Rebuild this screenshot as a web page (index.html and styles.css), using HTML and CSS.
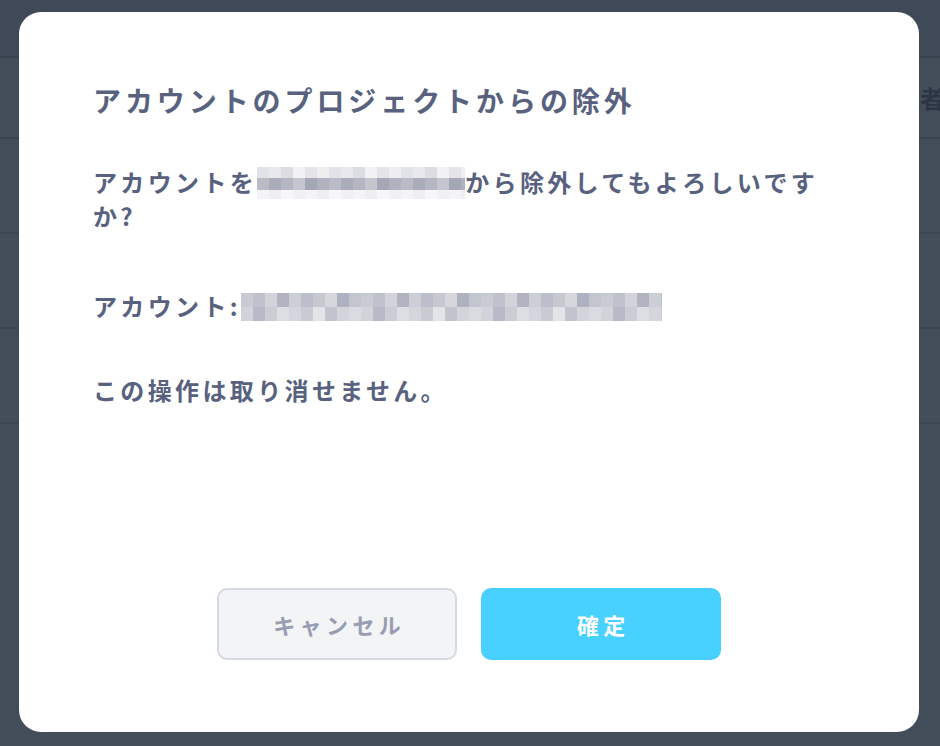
FILE: index.html
```html
<!DOCTYPE html>
<html lang="ja">
<head>
  <meta charset="UTF-8">
  <meta name="viewport" content="width=device-width, initial-scale=1.0">
  <title>アカウントのプロジェクトからの除外</title>
  <link rel="stylesheet" href="styles.css">
</head>
<body>
  <div class="page">
    <div class="topbar"></div>
    <div class="table-head">
      <span class="head-cell">管理者</span>
    </div>
    <div class="table-row"></div>
    <div class="table-row"></div>
    <div class="table-row"></div>
  </div>

  <div class="modal">
    <h1 class="modal-title">アカウントのプロジェクトからの除外</h1>
    <p class="modal-text">アカウントを<span class="mosaic mosaic-name"></span>から除外してもよろしいですか?</p>
    <p class="modal-text account">アカウント:<span class="mosaic mosaic-mail"></span></p>
    <p class="modal-text warning">この操作は取り消せません。</p>
    <div class="modal-footer">
      <button class="btn btn-cancel">キャンセル</button>
      <button class="btn btn-ok">確定</button>
    </div>
  </div>
</body>
</html>
```

FILE: styles.css
```css
body {
  margin: 0;
  background-color: #434c59;
  font-family: "Noto Sans CJK JP", "Noto Sans", sans-serif;
  overflow: hidden;
  height: 746px;
}

/* page behind the overlay */
.page {
  display: flex;
  flex-direction: column;
}
.topbar {
  height: 56px;
  background-color: #3f4957;
  border-bottom: 2px solid #39424e;
}
.table-head {
  height: 79px;
  border-bottom: 2px solid #3a434f;
  display: flex;
  align-items: center;
  padding-left: 872px;
  white-space: nowrap;
}
.head-cell {
  font-size: 24px;
  font-weight: bold;
  color: #2c3545;
}
.table-row {
  height: 93px;
  border-bottom: 2px solid #3d4551;
}

/* dialog */
.modal {
  position: absolute;
  left: 19px;
  top: 12px;
  width: 900px;
  height: 720px;
  box-sizing: border-box;
  padding: 69px 74px 72px;
  background-color: #fff;
  border-radius: 22px;
  display: flex;
  flex-direction: column;
  color: #58627f;
}
.modal-title {
  margin: 0;
  font-size: 28px;
  line-height: 39px;
  letter-spacing: 0.14em;
  font-weight: bold;
}
.modal-text {
  margin: 45px 0 0;
  font-size: 24px;
  line-height: 33px;
  letter-spacing: 0.14em;
  font-weight: bold;
}
.modal-text.account {
  margin-top: 57px;
}
.modal-text.warning {
  margin-top: 51px;
}

.mosaic {
  display: inline-block;
  background-repeat: no-repeat;
}
.mosaic-name {
  width: 208px;
  height: 32px;
  vertical-align: -7px;
  background-image:
    repeating-linear-gradient(90deg, #e2e3e8 0 12px, #e9e9ed 12px 24px, #dcdde3 24px 36px, #f2f2f4 36px 48px, #e4e4e9 48px 60px, #eeeef1 60px 72px),
    repeating-linear-gradient(90deg, #b9bbc7 0 12px, #a9acbb 12px 24px, #b4b6c3 24px 36px, #c3c5cf 36px 48px, #a4a7b6 48px 60px, #b0b2bf 60px 72px),
    repeating-linear-gradient(90deg, #f5f5f7 0 12px, #efeff2 12px 24px, #f7f7f9 24px 36px, #f1f1f4 36px 48px);
  background-size: 208px 11px, 208px 12px, 208px 9px;
  background-position: 0 0, 0 11px, 0 23px;
}
.mosaic-mail {
  width: 421px;
  height: 28px;
  vertical-align: -5px;
  background-image:
    repeating-linear-gradient(90deg, #c9cbd4 0 12px, #bfc1cc 12px 24px, #d3d4db 24px 36px, #b2b4c2 36px 48px, #cdcfd7 48px 60px, #bcbecb 60px 72px, #c6c8d1 72px 84px, #d6d7dd 84px 96px, #aeb1bf 96px 108px, #c3c5cf 108px 120px),
    repeating-linear-gradient(90deg, #d1d3da 0 12px, #b7b9c6 12px 24px, #cbcdd5 24px 36px, #dddee3 36px 48px, #d5d6dd 48px 60px, #c9cbd3 60px 72px, #e3e4e8 72px 84px, #c1c3cd 84px 96px, #d2d4db 96px 108px, #dadbe1 108px 120px);
  background-size: 421px 14px, 421px 14px;
  background-position: 0 0, 0 14px;
}

.modal-footer {
  margin-top: auto;
  display: flex;
  justify-content: center;
  gap: 24px;
}
.btn {
  width: 240px;
  height: 72px;
  box-sizing: border-box;
  border-radius: 10px;
  font-family: inherit;
  font-size: 22px;
  font-weight: bold;
  letter-spacing: 0.2em;
  padding: 0 0 0 0.2em;
  cursor: pointer;
}
.btn-cancel {
  background-color: #f3f4f6;
  border: 2px solid #d5dae2;
  color: #979db2;
}
.btn-ok {
  background-color: #48d0ff;
  border: none;
  color: #fff;
}
```
